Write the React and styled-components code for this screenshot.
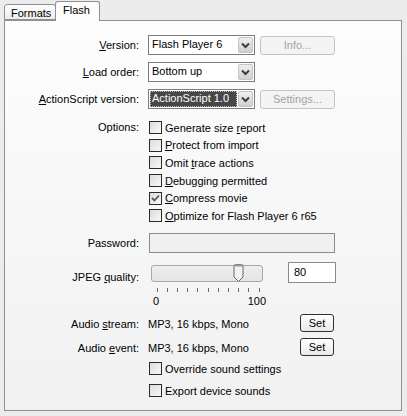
import React from 'react';
import styled, { createGlobalStyle } from 'styled-components';

const GlobalStyle = createGlobalStyle`
  html, body {
    margin: 0;
    padding: 0;
    background: #ececec;
  }
  body {
    font-family: "Liberation Sans", Arial, sans-serif;
    font-size: 11px;
    color: #000;
  }
`;

const Window = styled.div`
  width: 407px;
  height: 416px;
  box-sizing: border-box;
  padding: 1px 5px 0 4px;
  background: #ececec;
`;

const Tabs = styled.div`
  display: flex;
  align-items: flex-end;
  height: 19px;
  position: relative;
  z-index: 1;
`;

const Tab = styled.div`
  box-sizing: border-box;
  width: ${p => (p.$active ? 45 : 52)}px;
  height: ${p => (p.$active ? 20 : 16)}px;
  margin-bottom: ${p => (p.$active ? -1 : 0)}px;
  margin-left: ${p => (p.$active ? -1 : 0)}px;
  padding: ${p => (p.$active ? '2px 0 0 7px' : '2px 0 0 6px')};
  border: 1px solid #8f8f8f;
  border-bottom: ${p => (p.$active ? 'none' : '1px solid #8f8f8f')};
  border-radius: 3px 3px 0 0;
  background: ${p => (p.$active ? '#fcfcfc' : 'linear-gradient(#ffffff, #ececec)')};
  font-size: 11px;
  line-height: 13px;
  white-space: nowrap;
`;

const Panel = styled.div`
  box-sizing: border-box;
  width: 398px;
  height: 391px;
  border: 1px solid #8f8f8f;
  background: linear-gradient(#fdfdfd, #f1f1f1);
  padding-top: 14px;
`;

const Row = styled.div`
  display: grid;
  grid-template-columns: 134px auto;
  column-gap: 9px;
  align-items: ${p => p.$align || 'center'};
  height: ${p => (p.$h ? `${p.$h}px` : 'auto')};
  margin-top: ${p => p.$mt || 0}px;
`;

const Label = styled.div`
  text-align: right;
  white-space: nowrap;
  padding-top: ${p => p.$pt || 0}px;
  line-height: ${p => (p.$lh ? `${p.$lh}px` : 'normal')};
`;

const Controls = styled.div`
  display: flex;
  align-items: ${p => p.$align || 'center'};
`;

const Select = styled.div`
  box-sizing: border-box;
  width: 107px;
  height: 20px;
  border: 1px solid #7c7c7c;
  background: #fff;
  display: flex;
  align-items: center;
  padding: 1px;
`;

const SelectValue = styled.div`
  flex: 1;
  height: 16px;
  box-sizing: border-box;
  padding-left: 2px;
  line-height: 15px;
  margin-right: 1px;
  color: ${p => (p.$selected ? '#fff' : '#000')};
  background: ${p => (p.$selected ? '#474747' : 'transparent')};
  outline: ${p => (p.$selected ? '1px dotted #bdbdbd' : 'none')};
  outline-offset: -1px;
`;

const ArrowButton = styled.div`
  box-sizing: border-box;
  width: 15px;
  height: 16px;
  border: 1px solid #c4c4c4;
  border-radius: 2px;
  background: linear-gradient(#efefef, #cfcfcf);
  display: flex;
  align-items: center;
  justify-content: center;
`;

const PushButton = styled.div`
  box-sizing: border-box;
  width: ${p => p.$w}px;
  height: ${p => p.$h || 18}px;
  margin-left: ${p => p.$ml || 0}px;
  border: 1px solid ${p => (p.$disabled ? '#c4c4c4' : '#303030')};
  border-radius: 3px;
  background: ${p => (p.$disabled ? '#f4f4f4' : 'linear-gradient(#ffffff, #e9e9e9)')};
  color: ${p => (p.$disabled ? '#a3a3a3' : '#000')};
  display: flex;
  align-items: center;
  justify-content: center;
  font-size: 11px;
`;

const CheckList = styled.div`
  display: flex;
  flex-direction: column;
`;

const CheckRow = styled.div`
  display: flex;
  align-items: center;
  height: ${p => p.$h || 17.6}px;
  margin-top: ${p => p.$mt || 0}px;
  white-space: nowrap;
`;

const Box = styled.div`
  box-sizing: border-box;
  width: 13px;
  height: 13px;
  margin-left: 1px;
  margin-right: 3px;
  border: 1px solid #2a2a2a;
  background: linear-gradient(135deg, #dcdcdc, #f8f8f8);
  display: flex;
  align-items: center;
  justify-content: center;
`;

const TextField = styled.div`
  box-sizing: border-box;
  width: ${p => p.$w}px;
  height: ${p => p.$h}px;
  margin-left: ${p => p.$ml || 0}px;
  border: 1px solid #8a8a8a;
  background: ${p => (p.$disabled ? '#f0f0f0' : '#fff')};
  padding: 3px 5px;
  line-height: 13px;
`;

const SliderCol = styled.div`
  width: 114px;
  display: flex;
  flex-direction: column;
`;

const Track = styled.div`
  position: relative;
  box-sizing: border-box;
  width: 112px;
  height: 17px;
  margin: 3px 0 0 3px;
  border: 1px solid #a8a8a8;
  border-radius: 3px;
  background: linear-gradient(#eeeeee, #e4e4e4);
`;

const Thumb = styled.svg`
  position: absolute;
  left: ${p => p.$x}px;
  top: -2px;
`;

const Ticks = styled.svg`
  display: block;
  margin-top: 6px;
`;

const ScaleLabels = styled.div`
  display: flex;
  justify-content: space-between;
  width: 113px;
  margin: 4px 0 0 5px;
  line-height: 11px;
`;

const AudioValue = styled.div`
  width: 152px;
  white-space: nowrap;
  padding-top: 2px;
`;

function Chevron() {
  return (
    <svg width="9" height="7" viewBox="0 0 9 7">
      <path d="M1 1.5 L4.5 5 L8 1.5" fill="none" stroke="#3c3c3c" strokeWidth="2" />
    </svg>
  );
}

function Dropdown({ value, selected }) {
  return (
    <Select>
      <SelectValue $selected={selected}>{value}</SelectValue>
      <ArrowButton>
        <Chevron />
      </ArrowButton>
    </Select>
  );
}

function Check({ checked, children, h, mt }) {
  return (
    <CheckRow $h={h} $mt={mt}>
      <Box>
        {checked && (
          <svg width="9" height="9" viewBox="0 0 9 9">
            <path d="M1 4 L3.5 6.5 L8 1.5" fill="none" stroke="#5a5a5a" strokeWidth="1.8" />
          </svg>
        )}
      </Box>
      <span>{children}</span>
    </CheckRow>
  );
}

export default function App() {
  const ticks = Array.from({ length: 11 }, (_, i) => 8.5 + i * 10.2);
  return (
    <>
      <GlobalStyle />
      <Window>
        <Tabs>
          <Tab>Formats</Tab>
          <Tab $active>Flash</Tab>
        </Tabs>
        <Panel>
          <Row $h={20}>
            <Label><u>V</u>ersion:</Label>
            <Controls>
              <Dropdown value="Flash Player 6" />
              <PushButton $disabled $w={75} $h={19} $ml={5}>Info...</PushButton>
            </Controls>
          </Row>
          <Row $h={20} $mt={7}>
            <Label><u>L</u>oad order:</Label>
            <Controls>
              <Dropdown value="Bottom up" />
            </Controls>
          </Row>
          <Row $h={20} $mt={7}>
            <Label><u>A</u>ctionScript version:</Label>
            <Controls>
              <Dropdown value="ActionScript 1.0" selected />
              <PushButton $disabled $w={75} $h={19} $ml={5}>Settings...</PushButton>
            </Controls>
          </Row>
          <Row $align="start" $mt={10}>
            <Label $lh={17.6}>Options:</Label>
            <CheckList>
              <Check>Generate size <u>r</u>eport</Check>
              <Check><u>P</u>rotect from import</Check>
              <Check>Omit <u>t</u>race actions</Check>
              <Check><u>D</u>ebugging permitted</Check>
              <Check checked><u>C</u>ompress movie</Check>
              <Check><u>O</u>ptimize for Flash Player 6 r65</Check>
            </CheckList>
          </Row>
          <Row $h={20} $mt={8.4}>
            <Label>Password:</Label>
            <Controls>
              <TextField $disabled $w={186} $h={20} $ml={1} />
            </Controls>
          </Row>
          <Row $align="start" $mt={9}>
            <Label $pt={9}>JPEG <u>q</u>uality:</Label>
            <Controls $align="start">
              <SliderCol>
                <Track>
                  <Thumb $x={81} width="11" height="19" viewBox="0 0 11 19">
                    <path
                      d="M1 2 Q1 0.5 2.5 0.5 L8.5 0.5 Q10 0.5 10 2 L10 13 L5.5 17.5 L1 13 Z"
                      fill="#f2f2f2"
                      stroke="#6a6a6a"
                    />
                    <path d="M1.5 1.5 L9.5 1.5" stroke="#9a9a9a" strokeWidth="2" />
                  </Thumb>
                </Track>
                <Ticks width="120" height="4" viewBox="0 0 120 4">
                  {ticks.map(x => (
                    <line key={x} x1={Math.round(x) + 0.5} y1="0" x2={Math.round(x) + 0.5} y2="4" stroke="#6a6a6a" />
                  ))}
                </Ticks>
                <ScaleLabels>
                  <span>0</span>
                  <span>100</span>
                </ScaleLabels>
              </SliderCol>
              <TextField $w={48} $h={21} $ml={26}>80</TextField>
            </Controls>
          </Row>
          <Row $h={18} $mt={7}>
            <Label $pt={2}>Audio <u>s</u>tream:</Label>
            <Controls>
              <AudioValue>MP3, 16 kbps, Mono</AudioValue>
              <PushButton $w={34}>Set</PushButton>
            </Controls>
          </Row>
          <Row $h={18} $mt={6}>
            <Label $pt={2}>Audio <u>e</u>vent:</Label>
            <Controls>
              <AudioValue>MP3, 16 kbps, Mono</AudioValue>
              <PushButton $w={34}>Set</PushButton>
            </Controls>
          </Row>
          <Row $mt={4}>
            <div />
            <CheckList>
              <Check h={18}>Override sound settings</Check>
              <Check h={18} mt={4}>Export device sounds</Check>
            </CheckList>
          </Row>
        </Panel>
      </Window>
    </>
  );
}
